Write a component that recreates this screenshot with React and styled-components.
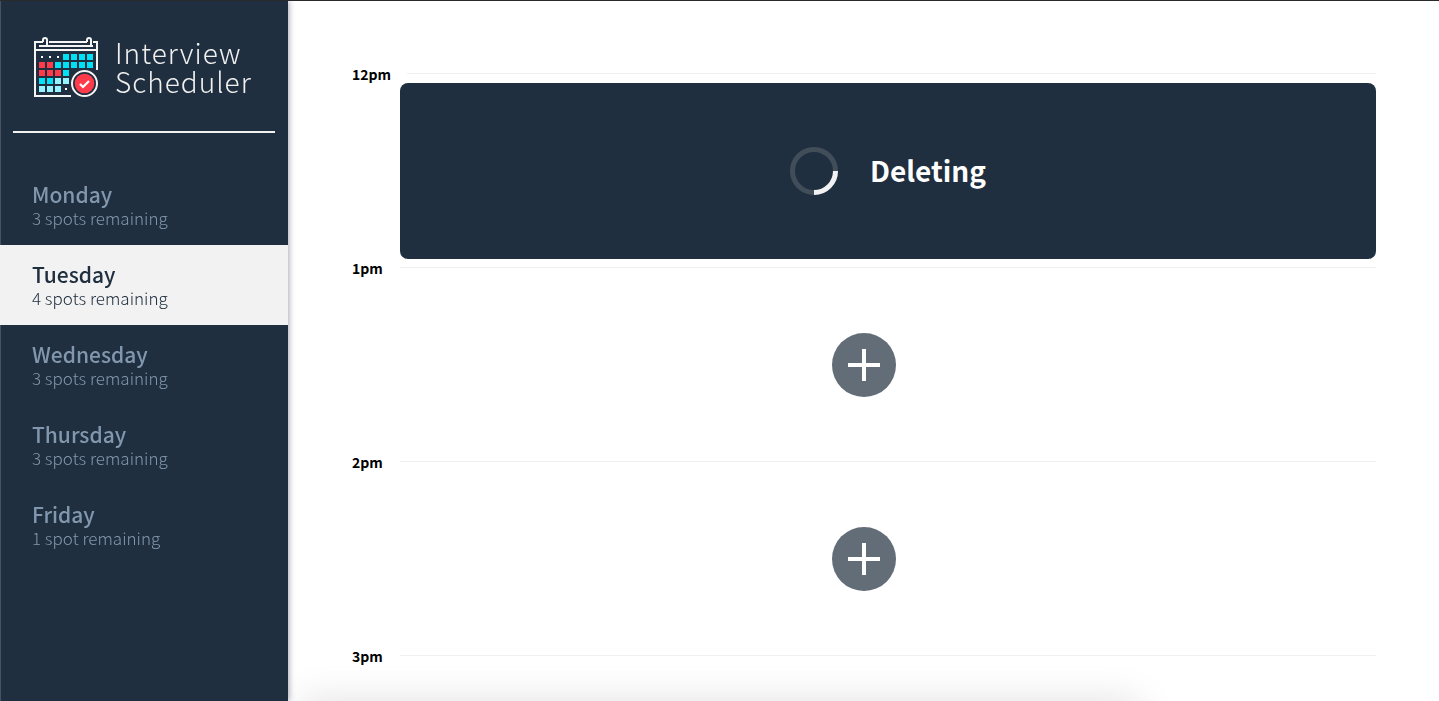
import React from "react";
import styled, { createGlobalStyle, css } from "styled-components";

const GlobalStyle = createGlobalStyle`
  *, *::before, *::after { box-sizing: border-box; }
  body {
    margin: 0;
    overflow: hidden;
    background: #fff;
    color: #000;
    font-family: "Noto Sans CJK SC", "Noto Sans", sans-serif;
  }
`;

const Layout = styled.main`
  display: flex;
  height: 100vh;
  overflow: hidden;
  border-top: 1px solid #2a2a2c;
`;

const Sidebar = styled.section`
  display: flex;
  flex-direction: column;
  flex: 0 0 288px;
  background: #202f3f;
  border-left: 1px solid #46525f;
  box-shadow: 1px 0 6px rgba(32, 34, 72, 0.4);
  z-index: 1;
`;

const Brand = styled.h1`
  display: flex;
  align-items: center;
  gap: 16px;
  margin: 0;
  padding: 35px 0 33px 32px;
  color: #f0f0f0;
  font-size: 28px;
  font-weight: 300;
  line-height: 29px;
  letter-spacing: 1px;
`;

const BrandName = styled.span`
  display: flex;
  flex-direction: column;
`;

const Divider = styled.hr`
  width: calc(100% - 25px);
  height: 2px;
  margin: 0 auto 32px 12px;
  border: 0;
  background: #f2f2f2;
`;

const DayList = styled.ul`
  margin: 0 0 0 -1px;
  padding: 0;
  list-style: none;
`;

const DayButton = styled.button`
  display: flex;
  flex-direction: column;
  width: 100%;
  height: 80px;
  padding: 17px 32px 15px 31px;
  border: 0;
  border-left: 1px solid #46525f;
  background: none;
  color: #8197ad;
  font-family: inherit;
  text-align: left;
  cursor: pointer;
  ${({ $selected }) =>
    $selected &&
    css`
      background: #f2f2f2;
      border-color: #f2f2f2;
      color: #202f3f;
    `}
`;

const DayName = styled.span`
  font-size: 21px;
  font-weight: 500;
  line-height: 24px;
`;

const Spots = styled.span`
  font-size: 17px;
  font-weight: 300;
  line-height: 24px;
`;

const Schedule = styled.section`
  flex: 1;
  min-width: 0;
  padding: 64px 63px 0 64px;
`;

const Slot = styled.article`
  display: flex;
  flex-direction: column;
`;

const SlotHeader = styled.header`
  display: flex;
  align-items: center;
  height: 18px;
`;

const Time = styled.h4`
  min-width: 48px;
  margin: 0;
  padding-right: 16px;
  font-size: 14px;
  font-weight: 700;
  line-height: 18px;
`;

const Rule = styled.hr`
  flex: 1;
  height: 1px;
  margin: 0 0 2px;
  border: 0;
  background: #f0f0f0;
`;

const Status = styled.div`
  display: flex;
  align-items: center;
  justify-content: center;
  gap: 32px;
  height: 176px;
  margin-left: 48px;
  border-radius: 8px;
  background: #202f3f;
  color: #fff;
`;

const StatusText = styled.h2`
  margin: 0;
  padding-bottom: 2px;
  font-size: 28px;
  font-weight: 700;
  line-height: 48px;
`;

const Empty = styled.div`
  display: flex;
  align-items: center;
  justify-content: center;
  height: 176px;
`;

const AddButton = styled.button`
  display: flex;
  align-items: center;
  justify-content: center;
  width: 64px;
  height: 64px;
  padding: 0;
  border: 0;
  border-radius: 50%;
  background: #636d78;
  cursor: pointer;
`;

const BottomShade = styled.div`
  position: fixed;
  top: 100%;
  left: 300px;
  right: 300px;
  height: 80px;
  box-shadow: 0 0 40px rgba(0, 0, 0, 0.12);
  pointer-events: none;
`;

const red = "#ff3b4b";
const cyan = "#00e1f5";
const pale = "#94f3ff";
const cells = [
  [null, null, null, cyan, cyan, cyan, cyan],
  [red, red, cyan, cyan, cyan, cyan, cyan],
  [red, red, red, cyan],
  [cyan, cyan, pale, pale],
  [pale, pale, pale, null],
];

function CalendarLogo() {
  return (
    <svg width="66" height="62" viewBox="0 0 66 62" fill="none" aria-hidden="true">
      <g stroke="#f5f5f5" strokeWidth="2">
        <path d="M38 60H2V6H10M16 6H54M60 6H64V34" />
        <path d="M2 14H64M6 10H60" />
        <path d="M10 6V4A2 2 0 0 1 14 4V10M54 6V4A2 2 0 0 1 58 4V10" />
      </g>
      {cells.map((row, r) =>
        row.map((color, c) =>
          color ? (
            <rect key={`${r}-${c}`} x={6 + c * 8} y={18 + r * 8} width="6" height="6" fill={color} />
          ) : (
            <rect key={`${r}-${c}`} x={8 + c * 8} y={20 + r * 8} width="2" height="2" fill="#fff" />
          )
        )
      )}
      <circle cx="51.500" cy="47.500" r="12.500" fill="#202f3f" stroke="#f5f5f5" strokeWidth="2" />
      <circle cx="51.500" cy="47.500" r="9.800" fill={red} />
      <path d="M47 48L50 51L56 45" stroke="#fff" strokeWidth="2.200" />
    </svg>
  );
}

function Spinner() {
  return (
    <svg width="48" height="48" viewBox="0 0 48 48" fill="none" role="img" aria-label="Loading">
      <circle cx="24" cy="24" r="21.500" stroke="#414e5a" strokeWidth="5" />
      <path d="M45.500 24A21.500 21.500 0 0 1 24 45.500" stroke="#f2f2f2" strokeWidth="5" />
    </svg>
  );
}

function PlusIcon() {
  return (
    <svg width="32" height="32" viewBox="0 0 32 32" aria-hidden="true">
      <path d="M14 0H18V14H32V18H18V32H14V18H0V14H14Z" fill="#fff" />
    </svg>
  );
}

const days = [
  { name: "Monday", spots: "3 spots remaining" },
  { name: "Tuesday", spots: "4 spots remaining" },
  { name: "Wednesday", spots: "3 spots remaining" },
  { name: "Thursday", spots: "3 spots remaining" },
  { name: "Friday", spots: "1 spot remaining" },
];

const slots = [
  { time: "12pm", deleting: true },
  { time: "1pm" },
  { time: "2pm" },
  { time: "3pm" },
];

export default function App() {
  return (
    <>
      <GlobalStyle />
      <Layout>
        <Sidebar>
          <Brand>
            <CalendarLogo />
            <BrandName>
              <span>Interview</span>
              <span>Scheduler</span>
            </BrandName>
          </Brand>
          <Divider />
          <nav aria-label="Days">
            <DayList>
              {days.map((day) => (
                <li key={day.name}>
                  <DayButton type="button" $selected={day.name === "Tuesday"}>
                    <DayName>{day.name}</DayName>
                    <Spots>{day.spots}</Spots>
                  </DayButton>
                </li>
              ))}
            </DayList>
          </nav>
        </Sidebar>
        <Schedule>
          {slots.map((slot) => (
            <Slot key={slot.time}>
              <SlotHeader>
                <Time>{slot.time}</Time>
                <Rule />
              </SlotHeader>
              {slot.deleting ? (
                <Status>
                  <Spinner />
                  <StatusText>Deleting</StatusText>
                </Status>
              ) : (
                <Empty>
                  <AddButton type="button" aria-label={`Add interview at ${slot.time}`}>
                    <PlusIcon />
                  </AddButton>
                </Empty>
              )}
            </Slot>
          ))}
        </Schedule>
      </Layout>
      <BottomShade />
    </>
  );
}
